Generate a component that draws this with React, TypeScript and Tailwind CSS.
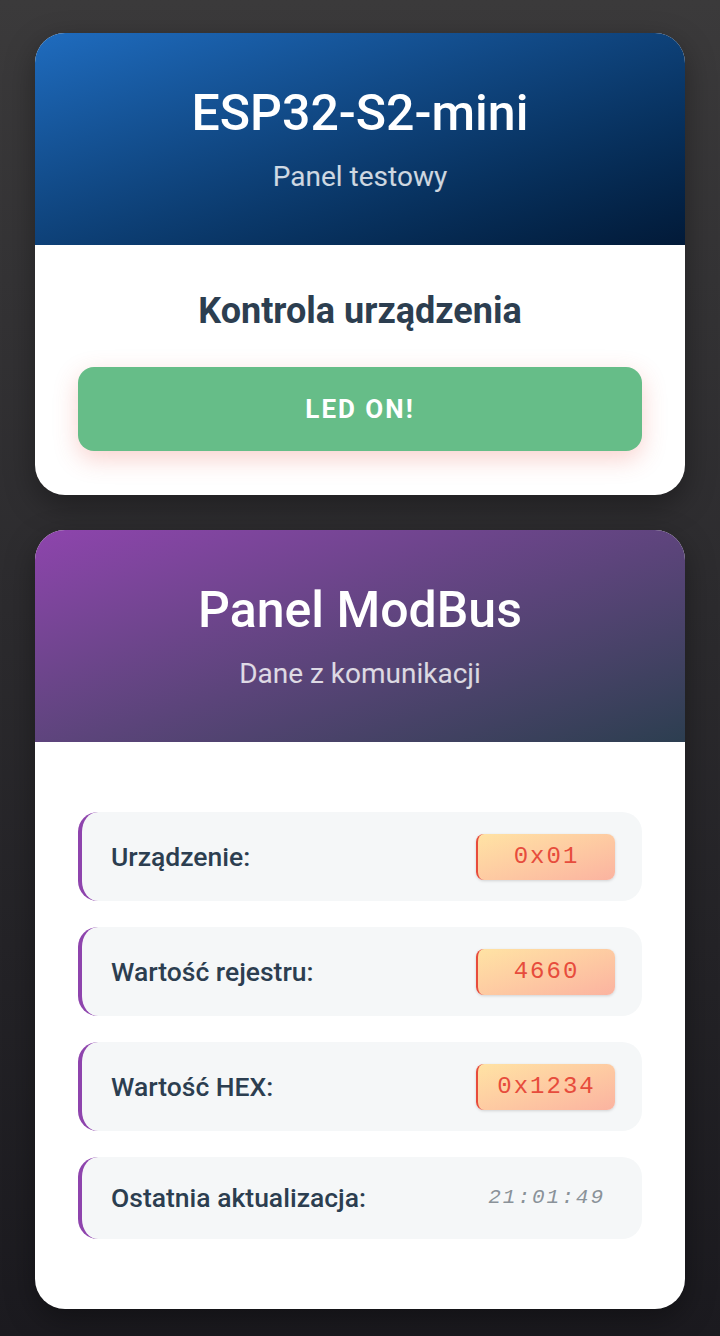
import React from 'react'

const rows = [
  { label: 'Urządzenie:', value: '0x01', badge: true },
  { label: 'Wartość rejestru:', value: '4660', badge: true },
  { label: 'Wartość HEX:', value: '0x1234', badge: true },
  { label: 'Ostatnia aktualizacja:', value: '21:01:49', badge: false },
]

function CardHeader({ title, subtitle, tone }: { title: string; subtitle: string; tone: string }) {
  return (
    <div className={`flex h-[212px] flex-col items-center pt-[50px] ${tone}`}>
      <h1 className="text-[50px] leading-[60px] font-medium text-white">{title}</h1>
      <p className="mt-[17px] text-[28px] leading-[34px] text-white/80">{subtitle}</p>
    </div>
  )
}

export default function App() {
  return (
    <div
      className="min-h-[1336px] bg-gradient-to-b from-[#3b3a3b] to-[#1b1a1f] px-[35px] pt-[33px] pb-[26px]"
      style={{ fontFamily: 'Roboto, "Noto Sans", sans-serif' }}
    >
      <div className="overflow-hidden rounded-[30px] bg-white shadow-[0_10px_30px_rgba(0,0,0,0.35)]">
        <CardHeader
          title="ESP32-S2-mini"
          subtitle="Panel testowy"
          tone="bg-gradient-to-br from-[#1f6cbf] to-[#021a38]"
        />
        <div className="flex flex-col items-center px-[43px] pt-[44px] pb-[44px]">
          <h2 className="text-[36px] leading-[44px] font-bold text-[#2c3e50]">Kontrola urządzenia</h2>
          <button className="mt-[34px] flex h-[84px] w-full items-center justify-center rounded-[16px] bg-[#66bd88] text-[26px] font-bold tracking-[2px] text-white shadow-[0_8px_24px_rgba(231,76,60,0.25)]">
            LED ON!
          </button>
        </div>
      </div>

      <div className="mt-[35px] overflow-hidden rounded-[30px] bg-white shadow-[0_10px_30px_rgba(0,0,0,0.35)]">
        <CardHeader
          title="Panel ModBus"
          subtitle="Dane z komunikacji"
          tone="bg-gradient-to-br from-[#8e44ad] to-[#2c3e50]"
        />
        <div className="flex flex-col gap-[26px] px-[43px] pt-[70px] pb-[70px]">
          {rows.map((r) => (
            <div
              key={r.label}
              className={`flex items-center justify-between rounded-[20px] border-l-[4px] border-[#8e44ad] bg-[#f5f7f8] pl-[29px] pr-[27px] ${
                r.badge ? 'h-[89px]' : 'h-[82px]'
              }`}
            >
              <span className="text-[26.5px] font-medium text-[#2c3e50]">{r.label}</span>
              {r.badge ? (
                <span
                  className="flex h-[46px] w-[139px] items-center justify-center rounded-[8px] border-l-[2px] border-[#e74c3c] bg-gradient-to-br from-[#ffe3a4] to-[#fbb3a0] text-[24px] tracking-[2px] text-[#e74c3c] shadow-[0_1px_3px_rgba(0,0,0,0.15)]"
                  style={{ fontFamily: '"Liberation Mono", "Courier New", monospace' }}
                >
                  {r.value}
                </span>
              ) : (
                <span
                  className="pr-[10px] text-[21px] italic tracking-[2px] text-[#8a9299]"
                  style={{ fontFamily: '"Liberation Mono", "Courier New", monospace' }}
                >
                  {r.value}
                </span>
              )}
            </div>
          ))}
        </div>
      </div>
    </div>
  )
}
